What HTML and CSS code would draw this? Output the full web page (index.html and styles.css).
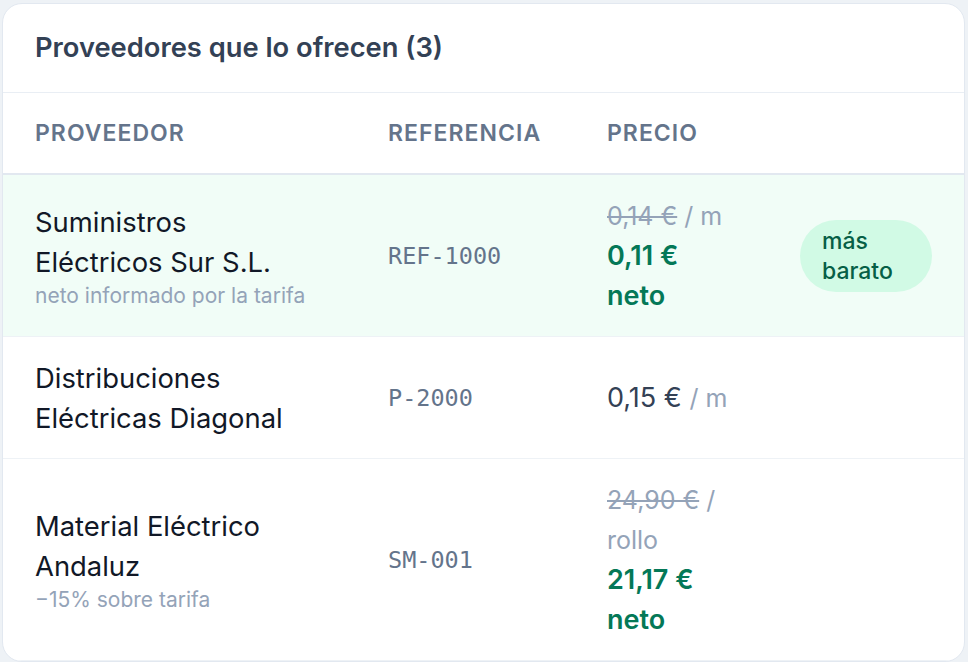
FILE: index.html
```html
<!DOCTYPE html>
<html lang="es">
<head>
    <meta charset="UTF-8">
    <meta name="viewport" content="width=device-width, initial-scale=1.0">
    <title>Proveedores</title>
    <link rel="stylesheet" href="styles.css">
</head>
<body>
    <div class="card">
        <h2 class="card-title">Proveedores que lo ofrecen (3)</h2>

        <table class="suppliers">
            <colgroup>
                <col class="col-name">
                <col class="col-ref">
                <col class="col-price">
                <col>
            </colgroup>
            <thead>
                <tr>
                    <th>Proveedor</th>
                    <th>Referencia</th>
                    <th>Precio</th>
                    <th></th>
                </tr>
            </thead>
            <tbody>
                <tr class="best">
                    <td>
                        <div class="name">Suministros Eléctricos Sur S.L.</div>
                        <div class="note">neto informado por la tarifa</div>
                    </td>
                    <td class="ref">REF-1000</td>
                    <td class="price">
                        <span class="old"><s>0,14 €</s> / m</span><br>
                        <span class="net">0,11 € neto</span>
                    </td>
                    <td><span class="badge">más barato</span></td>
                </tr>
                <tr>
                    <td>
                        <div class="name">Distribuciones Eléctricas Diagonal</div>
                    </td>
                    <td class="ref">P-2000</td>
                    <td class="price">
                        0,15 € <span class="unit">/ m</span>
                    </td>
                    <td></td>
                </tr>
                <tr>
                    <td>
                        <div class="name">Material Eléctrico Andaluz</div>
                        <div class="note">−15% sobre tarifa</div>
                    </td>
                    <td class="ref">SM-001</td>
                    <td class="price">
                        <span class="old"><s>24,90 €</s> / rollo</span><br>
                        <span class="net">21,17 € neto</span>
                    </td>
                    <td></td>
                </tr>
            </tbody>
        </table>
    </div>
</body>
</html>
```

FILE: styles.css
```css
body {
    font-family: 'Inter', 'Liberation Sans', sans-serif;
    margin: 0;
    padding: 3px 3px 40px 2px;
    background-color: #eef2f6;
    color: #0f172a;
}

.card {
    background: #fff;
    border: 1px solid #e2e8f0;
    border-radius: 20px;
    overflow: hidden;
}

.card-title {
    margin: 0;
    padding: 28px 32px;
    font-size: 27.3px;
    line-height: 32px;
    font-weight: 600;
    color: #334155;
    border-bottom: 1px solid #e9eef4;
}

.suppliers {
    width: 100%;
    border-collapse: collapse;
    table-layout: fixed;
}

.col-name {
    width: 353px;
}

.col-ref {
    width: 219px;
}

.col-price {
    width: 193px;
}

.suppliers th {
    padding: 25px 32px;
    text-align: left;
    font-size: 23px;
    line-height: 30px;
    font-weight: 600;
    letter-spacing: 0.045em;
    text-transform: uppercase;
    color: #64748b;
    border-bottom: 2px solid #e2e8f0;
}

.suppliers td {
    padding: 20.5px 32px;
    font-size: 27px;
    line-height: 40px;
    vertical-align: middle;
    border-bottom: 1px solid #eef2f6;
}

.suppliers tr.best td {
    background-color: #f1fdf7;
}

.name {
    max-width: 270px;
    font-size: 27.4px;
    color: #111827;
}

.note {
    font-size: 21px;
    line-height: 27px;
    color: #94a3b8;
}

.suppliers td.ref {
    font-family: 'DejaVu Sans Mono', 'Liberation Mono', monospace;
    font-size: 23.5px;
    color: #64748b;
}

.price {
    color: #334155;
}

.old,
.unit {
    font-size: 25px;
    color: #94a3b8;
}

.net {
    font-weight: 600;
    color: #047857;
}

.badge {
    display: inline-block;
    padding: 6px 22px;
    font-size: 23px;
    line-height: 30px;
    font-weight: 500;
    color: #065f46;
    background-color: #d1fae5;
    border-radius: 36px;
}
```
